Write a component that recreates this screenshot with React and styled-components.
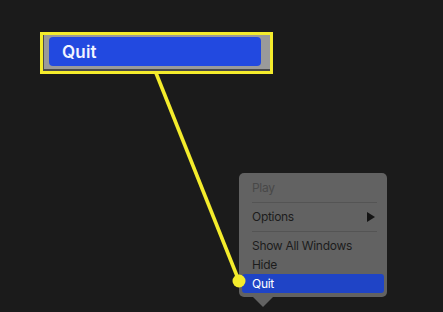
import React from 'react';
import styled, { createGlobalStyle } from 'styled-components';

const Global = createGlobalStyle`
  html, body {
    margin: 0;
    padding: 0;
    background: #1b1b1b;
  }
  body {
    font-family: 'Inter', 'Liberation Sans', sans-serif;
  }
`;

const Canvas = styled.div`
  position: relative;
  width: 443px;
  height: 312px;
  overflow: hidden;
  background: #1b1b1b;
  padding: 32px 0 0 40px;
  box-sizing: border-box;
`;

const Callout = styled.div`
  width: 233px;
  height: 42px;
  box-sizing: border-box;
  border: 3px solid #f4ec2c;
  background: #9a9a9a;
  box-shadow: inset 1px -2px 0 #4a4a4a;
  padding: 2px 9px 5px 6px;
  display: flex;
`;

const CalloutButton = styled.div`
  flex: 1;
  background: #2249e0;
  border-radius: 4px;
  display: flex;
  align-items: center;
  padding-left: 13px;
  color: #f2f4ff;
  font-size: 17px;
  font-weight: 600;
  letter-spacing: 0.2px;
`;

const Menu = styled.div`
  position: relative;
  margin: 99px 0 0 199px;
  width: 148px;
  box-sizing: border-box;
  background: #626262;
  border-radius: 5px;
  padding: 5px 3px 4px 3px;
  display: flex;
  flex-direction: column;

  &::after {
    content: '';
    position: absolute;
    left: 14px;
    bottom: -10px;
    border-left: 10px solid transparent;
    border-right: 10px solid transparent;
    border-top: 10px solid #626262;
  }
`;

const Item = styled.div`
  height: 19px;
  display: flex;
  align-items: center;
  justify-content: space-between;
  padding: 0 9px 0 10px;
  border-radius: 3px;
  font-size: 12px;
  letter-spacing: -0.3px;
  color: ${p => (p.$disabled ? '#484848' : p.$active ? '#ffffff' : '#1c1c1c')};
  background: ${p => (p.$active ? '#1f44c6' : 'transparent')};
`;

const Separator = styled.div`
  height: 10px;
  display: flex;
  align-items: center;
  padding: 0 7px 0 10px;

  &::before {
    content: '';
    flex: 1;
    height: 1px;
    background: #545454;
  }
`;

const Arrow = styled.span`
  width: 0;
  height: 0;
  border-top: 5px solid transparent;
  border-bottom: 5px solid transparent;
  border-left: 8px solid #141414;
`;

const Overlay = styled.svg`
  position: absolute;
  left: 0;
  top: 0;
  pointer-events: none;
`;

export default function App() {
  return (
    <>
      <Global />
      <Canvas>
        <Callout>
          <CalloutButton>Quit</CalloutButton>
        </Callout>
        <Menu>
          <Item $disabled>Play</Item>
          <Separator />
          <Item>
            Options
            <Arrow />
          </Item>
          <Separator />
          <Item>Show All Windows</Item>
          <Item>Hide</Item>
          <Item $active>Quit</Item>
        </Menu>
        <Overlay width="443" height="312" viewBox="0 0 443 312">
          <line x1="156" y1="73" x2="239" y2="281" stroke="#f4ec2c" strokeWidth="3.6" />
          <circle cx="239" cy="281" r="6.5" fill="#f4ec2c" />
        </Overlay>
      </Canvas>
    </>
  );
}
